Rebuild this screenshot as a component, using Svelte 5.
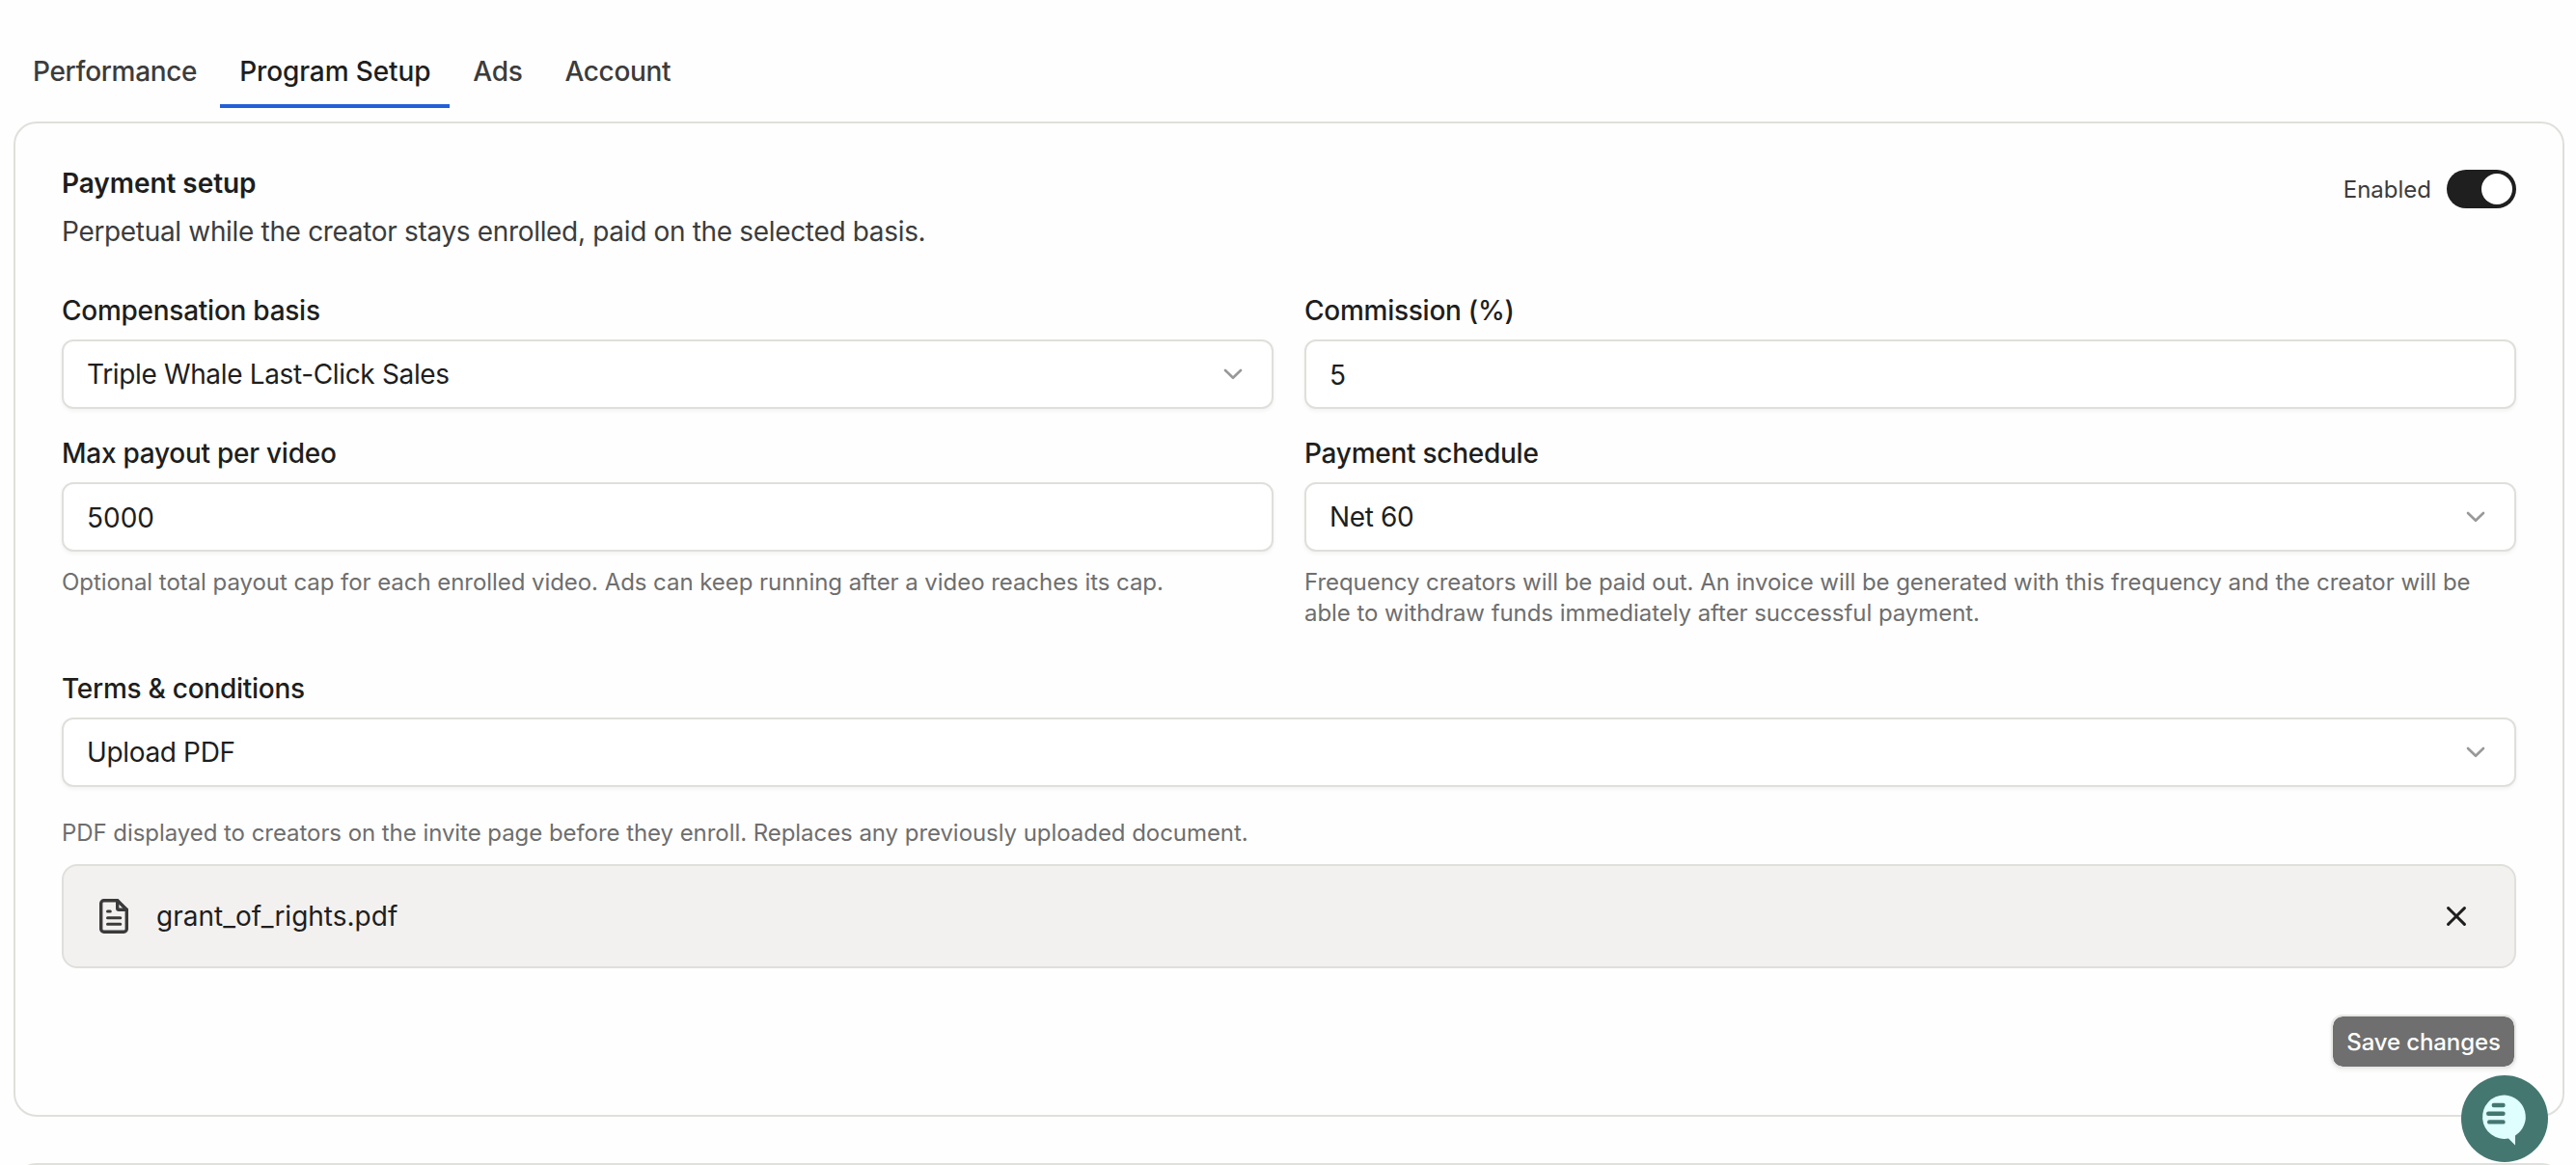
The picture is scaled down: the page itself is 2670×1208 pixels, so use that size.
<script lang="ts">
  const tabs = ['Performance', 'Program Setup', 'Ads', 'Account'];

  let activeTab = $state('Program Setup');
  let enabled = $state(true);
  let commission = $state('5');
  let maxPayout = $state('5000');
  let fileName = $state('grant_of_rights.pdf');
</script>

{#snippet chevron()}
  <svg width="32" height="32" viewBox="0 0 32 32" fill="none">
    <path d="M8 12l8 7.800 8-7.800" stroke="#999" stroke-width="2.600" stroke-linecap="round" stroke-linejoin="round" />
  </svg>
{/snippet}

<div class="page">
  <nav class="tabs">
    {#each tabs as tab}
      <button type="button" class="tab" class:active={activeTab === tab} onclick={() => (activeTab = tab)}>{tab}</button>
    {/each}
  </nav>

  <section class="card">
    <header class="card-header">
      <div>
        <h2>Payment setup</h2>
        <p class="desc">Perpetual while the creator stays enrolled, paid on the selected basis.</p>
      </div>
      <div class="toggle-row">
        <span>Enabled</span>
        <button
          type="button"
          class="toggle"
          class:on={enabled}
          aria-label="Enabled"
          onclick={() => (enabled = !enabled)}
        >
          <span class="thumb"></span>
        </button>
      </div>
    </header>

    <div class="grid">
      <div class="field">
        <span class="label">Compensation basis</span>
        <button type="button" class="control select">Triple Whale Last-Click Sales {@render chevron()}</button>
      </div>
      <div class="field">
        <label class="label" for="commission">Commission (%)</label>
        <input id="commission" class="control" bind:value={commission} />
      </div>
      <div class="field">
        <label class="label" for="payout">Max payout per video</label>
        <input id="payout" class="control" bind:value={maxPayout} />
        <p class="help">Optional total payout cap for each enrolled video. Ads can keep running after a video reaches its cap.</p>
      </div>
      <div class="field">
        <span class="label">Payment schedule</span>
        <button type="button" class="control select">Net 60 {@render chevron()}</button>
        <p class="help">
          Frequency creators will be paid out. An invoice will be generated with this frequency and the creator will be
          able to withdraw funds immediately after successful payment.
        </p>
      </div>
    </div>

    <div class="field terms">
      <span class="label">Terms &amp; conditions</span>
      <button type="button" class="control select">Upload PDF {@render chevron()}</button>
      <p class="help">PDF displayed to creators on the invite page before they enroll. Replaces any previously uploaded document.</p>
      {#if fileName}
        <div class="file">
          <svg width="40" height="40" viewBox="0 0 40 40" fill="none" stroke="#3a3a3a" stroke-width="3.400" stroke-linecap="round" stroke-linejoin="round">
            <path d="M24.700 3.700H10.700a3 3 0 0 0-3 3v26.600a3 3 0 0 0 3 3h20.600a3 3 0 0 0 3-3V13.300z" />
            <path d="M24.700 3.700v8.100a1.500 1.500 0 0 0 1.500 1.500h8.100" />
            <path d="M14.500 15h2.800M14.500 21.700h13.300M14.500 28.300h13.300" stroke-width="3" />
          </svg>
          <span class="file-name">{fileName}</span>
          <button type="button" class="remove" aria-label="Remove file" onclick={() => (fileName = '')}>
            <svg width="24" height="24" viewBox="0 0 24 24" fill="none" stroke="#1e1e1e" stroke-width="3" stroke-linecap="round">
              <path d="M3.600 3.600l16.800 16.800M20.400 3.600L3.600 20.400" />
            </svg>
          </button>
        </div>
      {/if}
    </div>

    <div class="actions">
      <button type="button" class="save">Save changes</button>
    </div>
  </section>

  <section class="card next"></section>

  <button type="button" class="chat" aria-label="Open chat">
    <svg width="90" height="90" viewBox="0 0 90 90">
      <path d="M45 20.500a22.700 22.700 0 1 0 4 45l7 7v-10A22.700 22.700 0 0 0 45 20.500z" fill="#dffefe" />
      <path d="M33.800 31h9.700M28.200 39.800h15.300M29.200 48.400h14.300" stroke="#457771" stroke-width="4.400" stroke-linecap="round" />
    </svg>
  </button>
</div>

<style>
  :global(body) {
    background: #fefefe;
    overflow: hidden;
  }

  .page {
    box-sizing: border-box;
    height: 1208px;
    overflow: hidden;
    padding: 36px 12px 0 14px;
    font-family: Inter, 'Liberation Sans', sans-serif;
    font-size: 28px;
    color: #1e1e1e;
  }

  button, input {
    font: inherit;
    color: inherit;
    margin: 0;
  }
  button { cursor: pointer; }
  h2, p { margin: 0; }
  svg { display: block; flex-shrink: 0; }

  .tabs {
    display: flex;
    gap: 4px;
    margin-bottom: 14px;
  }
  .tab {
    height: 76px;
    padding: 4px 20px 0;
    background: none;
    border: none;
    border-bottom: 4px solid transparent;
    color: #3c3c3c;
    font-weight: 500;
    letter-spacing: -0.32px;
  }
  .tab.active {
    color: #1e1e1e;
    border-color: #2360d8;
    letter-spacing: -0.12px;
  }

  .card {
    box-sizing: border-box;
    height: 1032px;
    padding: 48px;
    border: 2px solid #dfdfdb;
    border-radius: 24px;
  }
  .card.next { margin-top: 48px; }

  .card-header {
    display: flex;
    justify-content: space-between;
    align-items: flex-start;
  }
  h2 {
    font-size: 28px;
    font-weight: 600;
    line-height: 28px;
    letter-spacing: -0.05px;
  }
  .desc {
    margin-top: 16px;
    line-height: 40px;
    letter-spacing: -0.33px;
    color: #3c3c3c;
  }

  .toggle-row {
    display: flex;
    align-items: center;
    gap: 16px;
    font-size: 24px;
    color: #3c3c3c;
  }
  .toggle {
    display: flex;
    box-sizing: border-box;
    width: 72px;
    height: 40px;
    padding: 4px;
    border: none;
    border-radius: 20px;
    background: #aaa;
  }
  .toggle.on {
    justify-content: flex-end;
    background: #1f1f1f;
  }
  .thumb {
    width: 32px;
    height: 32px;
    border-radius: 50%;
    background: #fff;
  }

  .grid {
    display: grid;
    grid-template-columns: 1fr 1fr;
    gap: 28px 32px;
    margin-top: 44px;
  }
  .field {
    display: flex;
    flex-direction: column;
  }
  .label {
    margin-bottom: 12px;
    line-height: 36px;
    font-weight: 500;
    letter-spacing: -0.26px;
  }
  .control {
    display: flex;
    align-items: center;
    justify-content: space-between;
    box-sizing: border-box;
    width: 100%;
    height: 72px;
    padding: 0 24px;
    border: 2px solid #dfdfdb;
    border-radius: 12px;
    background: #fff;
    box-shadow: 0 2px 4px rgba(0, 0, 0, 0.05);
    text-align: left;
    outline: none;
  }
  .select { letter-spacing: -0.35px; }
  input.control { padding-top: 2px; }
  .help {
    margin-top: 16px;
    font-size: 24px;
    line-height: 32px;
    letter-spacing: -0.055px;
    color: #6e6e6e;
  }

  .terms { margin-top: 44px; }
  .terms .help { margin-top: 32px; }

  .file {
    display: flex;
    align-items: center;
    box-sizing: border-box;
    height: 108px;
    margin-top: 16px;
    padding: 0 48px 0 31px;
    border: 2px solid #dfdfdb;
    border-radius: 16px;
    background: #f3f1ef;
  }
  .file-name {
    flex: 1;
    margin-left: 25px;
  }
  .remove {
    padding: 0;
    border: none;
    background: none;
  }

  .actions {
    display: flex;
    justify-content: flex-end;
    margin-top: 48px;
  }
  .save {
    width: 192px;
    height: 56px;
    padding: 0;
    border: 2px solid #e9e9e7;
    border-radius: 12px;
    background: #6f6f6f;
    background-clip: padding-box;
    box-shadow: 0 2px 4px rgba(0, 0, 0, 0.06);
    color: #fff;
    font-size: 24px;
    font-weight: 500;
    letter-spacing: -0.12px;
    white-space: nowrap;
  }

  .chat {
    position: fixed;
    right: 29px;
    bottom: 3px;
    width: 90px;
    height: 90px;
    padding: 0;
    border: none;
    border-radius: 50%;
    background: #457771;
  }
</style>
